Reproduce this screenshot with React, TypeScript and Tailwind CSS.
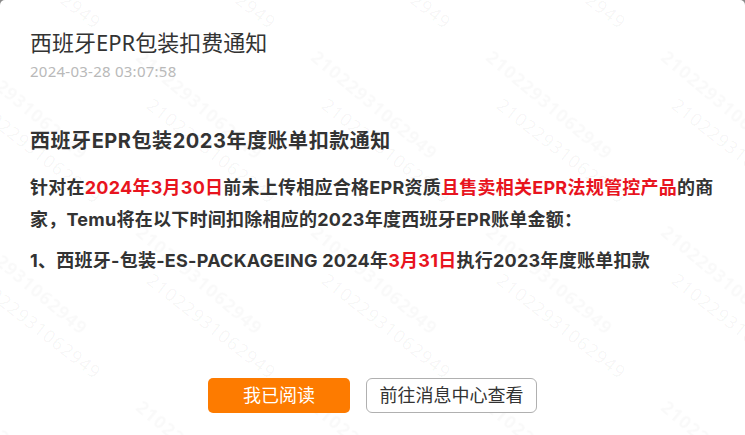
import React from "react";

const WM = "21022931062949";

function Watermarks() {
  const items: { x: number; y: number; k: string }[] = [];
  for (let r = 0; r < 4; r++) {
    for (let c = 0; c < 6; c++) {
      items.push({ x: -20 + c * 175, y: -80 + r * 175, k: `${r}-${c}` });
    }
  }
  return (
    <div className="pointer-events-none absolute inset-0 overflow-hidden">
      {items.map((p) => (
        <span
          key={"b" + p.k}
          className="absolute origin-top-left rotate-[40deg] whitespace-nowrap font-['Noto_Sans',sans-serif] text-[18px] font-bold leading-none tracking-[1px] text-[rgba(0,0,0,0.025)] blur-[0.6px]"
          style={{ left: p.x - 10, top: p.y - 48 }}
        >
          {WM}
        </span>
      ))}
      {items.map((p) => (
        <span
          key={"a" + p.k}
          className="absolute origin-top-left rotate-[38deg] whitespace-nowrap font-['Noto_Sans',sans-serif] text-[18px] leading-none tracking-[1px] text-[rgba(0,0,0,0.045)]"
          style={{ left: p.x, top: p.y }}
        >
          {WM}
        </span>
      ))}
    </div>
  );
}

export default function App() {
  return (
    <div className="h-[435px] w-[745px] bg-[#8a8a8a]">
      <div className="relative flex h-[435px] w-[745px] flex-col overflow-hidden rounded-t-[5px] bg-white font-['Noto_Sans','Noto_Sans_CJK_SC',sans-serif] text-[#333]">
        <Watermarks />
        <div className="relative pl-[30px] pr-[20px] pt-[27px]">
          <h1 className="text-[22px] font-normal leading-[30px] text-[#333]">西班牙EPR包装扣费通知</h1>
          <div className="mt-[4px] text-[15px] leading-[20px] tracking-[0.25px] text-[#b9b9b9]">2024-03-28 03:07:58</div>
          <div className="mt-[46px] font-['Inter','Noto_Sans_CJK_SC',sans-serif] text-[20px] font-bold leading-[28px] tracking-[0.55px]">
            西班牙EPR包装2023年度账单扣款通知
          </div>
          <div className="mt-[17px] font-['Inter','Noto_Sans_CJK_SC',sans-serif] text-[18px] font-bold leading-[32px] tracking-[0.25px]">
            <p>
              针对在<span className="text-[#e8141e]">2024年3月30日</span>前未上传相应合格EPR资质
              <span className="text-[#e8141e]">且售卖相关EPR法规管控产品</span>的商家，Temu将在以下时间扣除相应的2023年度西班牙EPR账单金额：
            </p>
            <p className="mt-[9px]">
              1、西班牙-包装-ES-PACKAGEING 2024年<span className="text-[#e8141e]">3月31日</span>执行2023年度账单扣款
            </p>
          </div>
        </div>
        <div className="relative mb-[22px] mt-auto flex justify-center gap-[16px]">
          <button className="h-[35px] w-[142px] rounded-[5px] bg-[#fd7b00] text-[18px] text-white">我已阅读</button>
          <button className="h-[35px] w-[171px] rounded-[6px] border border-[#b0b0b0] bg-white text-[18px] text-[#333]">前往消息中心查看</button>
        </div>
      </div>
    </div>
  );
}
